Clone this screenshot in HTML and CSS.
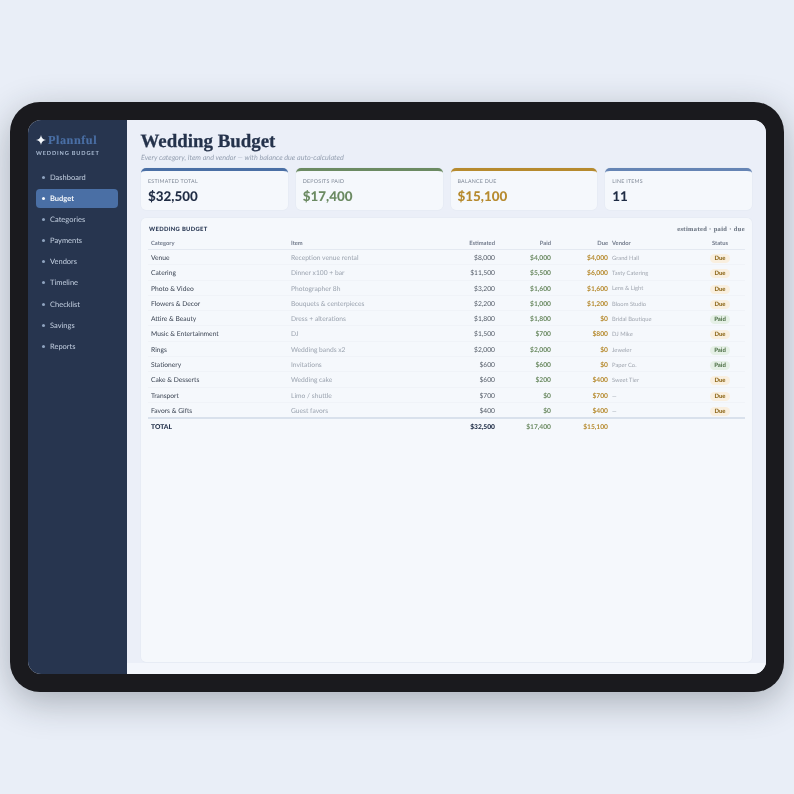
FILE: index.html
```html
<!DOCTYPE html>
<html lang="en">
<head>
<meta charset="utf-8">
<title>Wedding Budget</title>
<link rel="stylesheet" href="styles.css">
</head>
<body>
<div class="device">
  <div class="screen">
    <aside class="sidebar">
      <div class="brand"><svg class="spark" viewBox="0 0 10 10" aria-hidden="true"><path d="M5 0C5.5 3 7 4.5 10 5 7 5.5 5.5 7 5 10 4.5 7 3 5.5 0 5 3 4.5 4.5 3 5 0Z"/></svg><span class="brand-name">Plannful</span></div>
      <div class="brand-sub">WEDDING BUDGET</div>
      <nav class="nav">
        <a class="nav-item"><i></i>Dashboard</a>
        <a class="nav-item active"><i></i>Budget</a>
        <a class="nav-item"><i></i>Categories</a>
        <a class="nav-item"><i></i>Payments</a>
        <a class="nav-item"><i></i>Vendors</a>
        <a class="nav-item"><i></i>Timeline</a>
        <a class="nav-item"><i></i>Checklist</a>
        <a class="nav-item"><i></i>Savings</a>
        <a class="nav-item"><i></i>Reports</a>
      </nav>
    </aside>
    <main class="main">
      <h1>Wedding Budget</h1>
      <p class="subtitle">Every category, item and vendor — with balance due auto-calculated</p>
      <section class="stats">
        <div class="stat blue"><div class="stat-label">ESTIMATED TOTAL</div><div class="stat-value">$32,500</div></div>
        <div class="stat green"><div class="stat-label">DEPOSITS PAID</div><div class="stat-value">$17,400</div></div>
        <div class="stat gold"><div class="stat-label">BALANCE DUE</div><div class="stat-value">$15,100</div></div>
        <div class="stat slate"><div class="stat-label">LINE ITEMS</div><div class="stat-value">11</div></div>
      </section>
      <section class="panel">
        <div class="panel-head"><span class="panel-title">WEDDING BUDGET</span><span class="panel-note">estimated · paid · due</span></div>
        <table>
          <colgroup><col class="c1"><col class="c2"><col class="c3"><col class="c4"><col class="c5"><col class="c6"><col class="c7"></colgroup>
          <thead><tr><th>Category</th><th>Item</th><th class="r">Estimated</th><th class="r">Paid</th><th class="r">Due</th><th class="v">Vendor</th><th class="s">Status</th></tr></thead>
          <tbody>
            <tr><td class="cat">Venue</td><td class="item">Reception venue rental</td><td class="r est">$8,000</td><td class="r paid">$4,000</td><td class="r due">$4,000</td><td class="v">Grand Hall</td><td class="s"><span class="pill d">Due</span></td></tr>
            <tr><td class="cat">Catering</td><td class="item">Dinner x100 + bar</td><td class="r est">$11,500</td><td class="r paid">$5,500</td><td class="r due">$6,000</td><td class="v">Tasty Catering</td><td class="s"><span class="pill d">Due</span></td></tr>
            <tr><td class="cat">Photo &amp; Video</td><td class="item">Photographer 8h</td><td class="r est">$3,200</td><td class="r paid">$1,600</td><td class="r due">$1,600</td><td class="v">Lens &amp; Light</td><td class="s"><span class="pill d">Due</span></td></tr>
            <tr><td class="cat">Flowers &amp; Decor</td><td class="item">Bouquets &amp; centerpieces</td><td class="r est">$2,200</td><td class="r paid">$1,000</td><td class="r due">$1,200</td><td class="v">Bloom Studio</td><td class="s"><span class="pill d">Due</span></td></tr>
            <tr><td class="cat">Attire &amp; Beauty</td><td class="item">Dress + alterations</td><td class="r est">$1,800</td><td class="r paid">$1,800</td><td class="r due">$0</td><td class="v">Bridal Boutique</td><td class="s"><span class="pill p">Paid</span></td></tr>
            <tr><td class="cat">Music &amp; Entertainment</td><td class="item">DJ</td><td class="r est">$1,500</td><td class="r paid">$700</td><td class="r due">$800</td><td class="v">DJ Mike</td><td class="s"><span class="pill d">Due</span></td></tr>
            <tr><td class="cat">Rings</td><td class="item">Wedding bands x2</td><td class="r est">$2,000</td><td class="r paid">$2,000</td><td class="r due">$0</td><td class="v">Jeweler</td><td class="s"><span class="pill p">Paid</span></td></tr>
            <tr><td class="cat">Stationery</td><td class="item">Invitations</td><td class="r est">$600</td><td class="r paid">$600</td><td class="r due">$0</td><td class="v">Paper Co.</td><td class="s"><span class="pill p">Paid</span></td></tr>
            <tr><td class="cat">Cake &amp; Desserts</td><td class="item">Wedding cake</td><td class="r est">$600</td><td class="r paid">$200</td><td class="r due">$400</td><td class="v">Sweet Tier</td><td class="s"><span class="pill d">Due</span></td></tr>
            <tr><td class="cat">Transport</td><td class="item">Limo / shuttle</td><td class="r est">$700</td><td class="r paid">$0</td><td class="r due">$700</td><td class="v">—</td><td class="s"><span class="pill d">Due</span></td></tr>
            <tr><td class="cat">Favors &amp; Gifts</td><td class="item">Guest favors</td><td class="r est">$400</td><td class="r paid">$0</td><td class="r due">$400</td><td class="v">—</td><td class="s"><span class="pill d">Due</span></td></tr>
          </tbody>
          <tfoot><tr><td class="t-label">TOTAL</td><td></td><td class="r t-est">$32,500</td><td class="r t-paid">$17,400</td><td class="r t-due">$15,100</td><td></td><td></td></tr></tfoot>
        </table>
      </section>
    </main>
  </div>
</div>
</body>
</html>
```
FILE: styles.css
```css
* { box-sizing: border-box; }
html, body { height: 100%; }
body {
  margin: 0;
  background: #e9eef7;
  font-family: Lato, "Noto Sans", sans-serif;
  text-rendering: geometricPrecision;
  display: flex;
  align-items: flex-start;
  justify-content: center;
  padding-top: 102px;
}
.device {
  width: 774px;
  height: 590px;
  padding: 18px;
  background: #1a1a1e;
  border-radius: 30px;
  box-shadow: 0 10px 36px rgba(30, 40, 50, .32);
}
.screen {
  display: flex;
  height: 100%;
  border-radius: 13px;
  overflow: hidden;
  background: #edf1f9;
  will-change: transform;
}
.sidebar {
  width: 99px;
  flex: none;
  background: #27354f;
  padding: 13px 9px 0 8px;
}
.brand { display: flex; align-items: center; gap: 2px; height: 14px; }
.spark { width: 10px; height: 10px; fill: #f5f8fc; flex: none; }
.brand-name {
  color: #4a6fa5;
  font-family: "Liberation Serif", serif;
  font-weight: 700;
  font-size: 12.2px;
  line-height: 14px;
  letter-spacing: .55px;
  -webkit-text-stroke: .15px #4a6fa5;
}
.brand-sub {
  margin-top: 3px;
  color: #a9bad2;
  font-size: 5.6px;
  line-height: 8px;
  font-weight: 700;
  letter-spacing: .85px;
  white-space: nowrap;
}
.nav { margin-top: 9.4px; display: flex; flex-direction: column; gap: 2.12px; }
.nav-item {
  display: flex;
  align-items: center;
  gap: 5px;
  height: 19px;
  padding: 1px 0 0 6px;
  border-radius: 4px;
  color: #c3cfe0;
  font-size: 7.5px;
}
.nav-item i { width: 3px; height: 3px; border-radius: 50%; background: #8fa3bf; }
.nav-item.active { background: #4a6fa5; color: #f5f8fc; font-weight: 700; }
.nav-item.active i { background: #f5f8fc; }
.main {
  flex: 1;
  min-width: 0;
  padding: 11px 14px 12px 14px;
  display: flex;
  flex-direction: column;
  background: linear-gradient(#ebeff8 98%, #f3f6fc 98%);
}
h1 {
  margin: 0 0 0 -.5px;
  color: #24324b;
  font-family: "Liberation Serif", serif;
  font-weight: 700;
  font-size: 18.9px;
  line-height: 22px;
  -webkit-text-stroke: .25px #24324b;
}
.subtitle {
  margin: 0;
  color: #949fb0;
  font-size: 7.2px;
  font-style: italic;
  line-height: 10px;
}
.stats {
  margin-top: 5px;
  display: grid;
  grid-template-columns: repeat(4, 1fr);
  gap: 8px;
}
.stat {
  height: 42px;
  padding: 8px 7px 0;
  background: #f5f8fc;
  border-top: 3px solid #4a6fa5;
  border-radius: 5px;
  box-shadow: 0 0 0 .5px #e3e9f2;
}
.stat.green { border-top-color: #6b8a62; }
.stat.gold { border-top-color: #b68a2e; }
.stat.slate { border-top-color: #6584b4; }
.stat-label { color: #7f8896; font-size: 5.3px; line-height: 7px; letter-spacing: .25px; white-space: nowrap; }
.stat-value { margin-top: 1px; color: #1f2c44; font-size: 13.4px; line-height: 18px; font-weight: 900; }
.green .stat-value { color: #6b8a62; }
.gold .stat-value { color: #b68a2e; }
.panel {
  margin-top: 8px;
  flex: 1;
  min-height: 0;
  padding: 6px 7px 0;
  background: #f5f8fc;
  border-radius: 5px;
  box-shadow: 0 0 0 .5px #e3e9f2;
}
.panel-head { display: flex; justify-content: space-between; align-items: center; height: 10px; padding-left: 1px; }
.panel-title { color: #2b3a55; font-size: 5.8px; font-weight: 900; letter-spacing: .35px; }
.panel-note { color: #6f7885; font-family: "Liberation Serif", serif; font-size: 6.4px; font-weight: 700; letter-spacing: .4px; -webkit-text-stroke: .1px #6f7885; }
table {
  width: 597px;
  margin-top: 4.5px;
  border-collapse: collapse;
  table-layout: fixed;
}
.c1 { width: 140px; }
.c2 { width: 152px; }
.c3 { width: 58px; }
.c4 { width: 56px; }
.c5 { width: 57px; }
.c6 { width: 88px; }
.c7 { width: 46px; }
th {
  height: 11px;
  padding: 0 3px;
  text-align: left;
  color: #70798a;
  font-size: 5.8px;
  font-weight: 700;
  border-bottom: 1px solid #e4e9f1;
}
td {
  height: 15.3px;
  padding: 1.6px 3px 0;
  font-size: 6.7px;
  line-height: 10px;
  border-bottom: 1px solid #f0f3f8;
  white-space: nowrap;
}
.r { text-align: right; }
th.v { padding-left: 1px; }
td.v { padding: 3.4px 3px 0 1px; color: #a0a6b0; font-size: 5.8px; }
th.s, td.s { text-align: center; padding-right: 7px; padding-left: 3px; }
.cat { color: #3a4352; }
.item { color: #9ba3af; }
.est { color: #515965; }
.paid { color: #6b8a62; font-weight: 700; }
.due { color: #b68a2e; font-weight: 700; }
.pill {
  display: inline-block;
  padding: 0 4px;
  border-radius: 5px;
  font-size: 6px;
  line-height: 9px;
  font-weight: 900;
}
.pill.d { background: #f9efdf; color: #8f6a1e; }
.pill.p { background: #e5f0e6; color: #55764f; }
tbody tr:last-child td { border-bottom: 2px solid #d9e1ec; }
tfoot td { border-bottom: 0; height: 16.5px; font-weight: 900; font-size: 6.7px; }
.t-label { color: #24324b; }
.t-est { color: #24324b; }
.t-paid { color: #6b8a62; font-weight: 700; }
.t-due { color: #b68a2e; font-weight: 700; }
```
